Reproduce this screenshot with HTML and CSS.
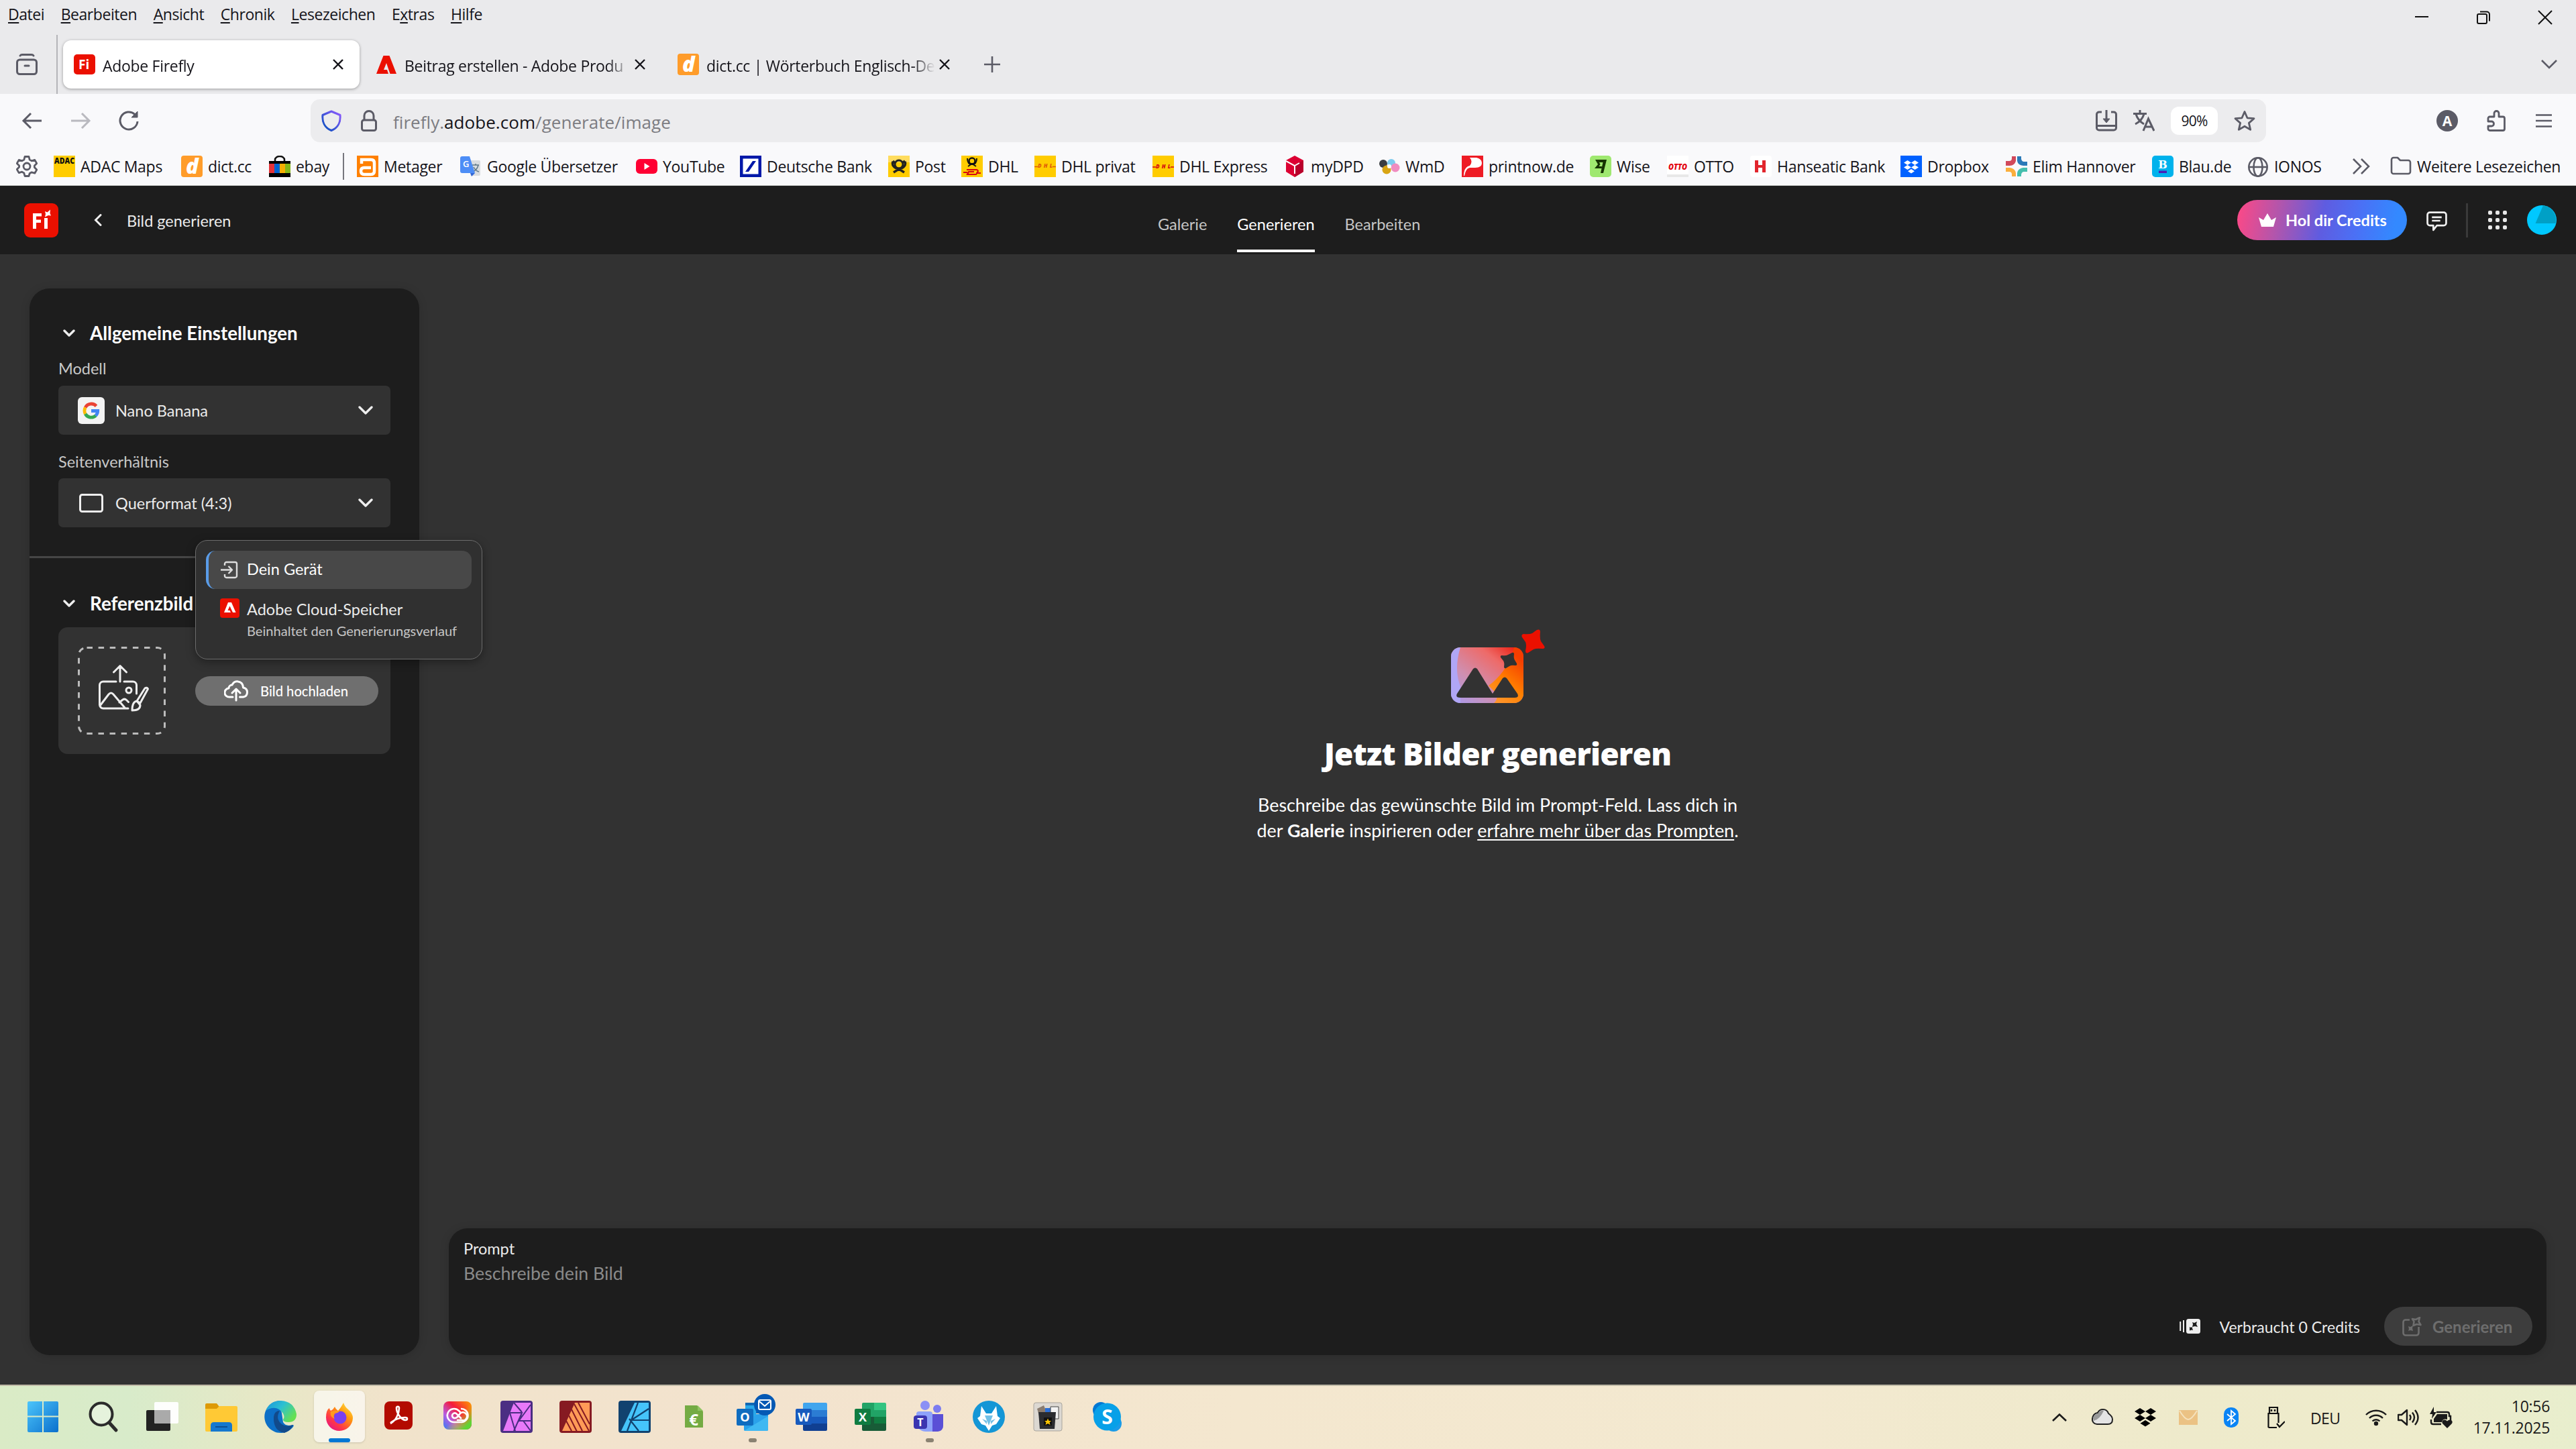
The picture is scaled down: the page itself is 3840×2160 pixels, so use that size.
FILE: index.html
```
<!DOCTYPE html>
<html lang="de">
<head>
  <meta charset="UTF-8" />
  <title>Adobe Firefly</title>
  <link rel="stylesheet" href="styles.css">
</head>
<body>
  <!-- Browser -->
  <div class="browser">
    <div class="menubar">
      <span><u>D</u>atei</span>
      <span><u>B</u>earbeiten</span>
      <span><u>A</u>nsicht</span>
      <span><u>C</u>hronik</span>
      <span><u>L</u>esezeichen</span>
      <span>E<u>x</u>tras</span>
      <span><u>H</u>ilfe</span>
      <div class="window-controls">
        <svg viewBox="0 0 20 20"><path d="M0 9h20" stroke="#111" stroke-width="2"/></svg>
        <svg viewBox="0 0 20 20" fill="none" stroke="#111" stroke-width="2"><rect x="1" y="5" width="14" height="14" rx="2"/><path d="M5 1.500h10a4 4 0 0 1 4 4v10"/></svg>
        <svg viewBox="0 0 20 20"><path d="M0 0l20 20M20 0L0 20" stroke="#111" stroke-width="2"/></svg>
      </div>
    </div>

    <div class="tabs">
      <svg class="firefox-view" viewBox="0 0 32 32" fill="none" stroke="#5b5b66" stroke-width="3" stroke-linecap="round"><rect x="1.500" y="9" width="29" height="21.500" rx="4"/><path d="M6 3q1-1.500 3-1.500h14q2 0 3 1.500M13 18h6"/></svg>
      <div class="tab-sep"></div>
      <div class="tab active">
        <svg class="fav" viewBox="0 0 32 32"><rect y="1" width="32" height="30" rx="5" fill="#eb1000"/><text x="7" y="23" class="fi-text" font-size="19">Fi</text></svg>
        <span class="tab-title">Adobe Firefly</span>
        <svg class="tab-close" viewBox="0 0 16 16"><path d="M1 1l14 14M15 1L1 15" stroke="#15141a" stroke-width="2.400"/></svg>
      </div>
      <div class="tab">
        <svg class="fav" viewBox="0 0 32 32"><path d="M11.500 3h9L31 30h-9.500L16 14l-4 10h5l2 6H1z" fill="#eb1000"/></svg>
        <span class="tab-title">Beitrag erstellen - Adobe Produ</span>
        <svg class="tab-close" viewBox="0 0 16 16"><path d="M1 1l14 14M15 1L1 15" stroke="#15141a" stroke-width="2.400"/></svg>
      </div>
      <div class="tab">
        <svg class="fav" viewBox="0 0 32 32"><rect width="32" height="32" rx="4" fill="#ff9c2a"/><text x="7" y="27" class="dict-text">d</text></svg>
        <span class="tab-title">dict.cc | Wörterbuch Englisch-De</span>
        <svg class="tab-close" viewBox="0 0 16 16"><path d="M1 1l14 14M15 1L1 15" stroke="#15141a" stroke-width="2.400"/></svg>
      </div>
      <svg class="tab-new" viewBox="0 0 24 24"><path d="M12 0v24M0 12h24" stroke="#5b5b66" stroke-width="2.600"/></svg>
      <svg class="tab-list" viewBox="0 0 24 24"><path d="M1 6l11 11L23 6" fill="none" stroke="#5b5b66" stroke-width="2.600"/></svg>
    </div>

    <div class="toolbar">
      <svg class="nav-icon" viewBox="0 0 32 32" fill="none" stroke="#5b5b66" stroke-width="3"><path d="M30 16H3M14 5L3 16l11 11"/></svg>
      <svg class="nav-icon dim" viewBox="0 0 32 32" fill="none" stroke="#5b5b66" stroke-width="3"><path d="M2 16h27M18 5l11 11-11 11"/></svg>
      <svg class="nav-icon" viewBox="0 0 32 32" fill="none" stroke="#5b5b66" stroke-width="3"><path d="M29 17a13 13 0 1 1-4-10.500l3 3"/><path d="M29 2v9h-9z" fill="#5b5b66" stroke-width="1"/></svg>
      <div class="urlbar">
        <svg class="fav" viewBox="0 0 32 32" fill="none" stroke="url(#shieldGrad)" stroke-width="3"><defs><linearGradient id="shieldGrad" x1="0" y1="1" x2="1" y2="0"><stop offset="0" stop-color="#0250bb"/><stop offset="1" stop-color="#9059ff"/></linearGradient></defs><path d="M16 2l13 5.500c1 10-3 19-13 23C6 26.500 2 17.500 3 7.500z" stroke-linejoin="round"/></svg>
        <svg class="lock" viewBox="0 0 24 32" fill="none" stroke="#5b5b66" stroke-width="3"><rect x="1.500" y="15" width="21" height="15.500" rx="3"/><path d="M5 15V8.500a7 7 0 0 1 14 0V15"/></svg>
        <span class="url">firefly.<b>adobe.com</b>/generate/image</span>
        <div class="url-actions">
          <svg class="fav" viewBox="0 0 32 32" fill="none" stroke="#5b5b66" stroke-width="3"><path d="M9 3H5a3.500 3.500 0 0 0-3.500 3.500v20A3.500 3.500 0 0 0 5 30h22a3.500 3.500 0 0 0 3.500-3.500v-20A3.500 3.500 0 0 0 27 3h-4M2 23.500h28M16 0v17"/><path d="M11 13h10l-5 6z" fill="#5b5b66" stroke-width="1"/></svg>
          <svg class="fav" viewBox="0 0 32 32" fill="none" stroke="#5b5b66" stroke-width="3"><path d="M0 5.500h20M10 0v6M4 6c2 7 7 12 12 15M16 6C14 13 9 18 3 21M15 31l7.500-18L31 31M18 25h10"/></svg>
          <span class="zoom">90%</span>
          <svg class="fav" viewBox="0 0 32 32" fill="none" stroke="#5b5b66" stroke-width="2.800" stroke-linejoin="round"><path d="M16 2.500l4 9.300 10 .9-7.600 6.700 2.300 10L16 24.200 7.300 29.400l2.300-10L2 12.700l10-.9z"/></svg>
        </div>
      </div>
      <div class="toolbar-right">
        <svg class="fav" viewBox="0 0 32 32"><circle cx="16" cy="16" r="16" fill="#5b5b66"/><text x="16" y="23.500" text-anchor="middle" fill="#fff" font-size="21" font-weight="700">A</text></svg>
        <svg class="fav" viewBox="0 0 32 32" fill="none" stroke="#5b5b66" stroke-width="2.800" stroke-linejoin="round"><path d="M3 12.500a2.500 2.500 0 0 1 2.500-2.500H12V5a3.500 3.500 0 0 1 7 0v5h6a2.500 2.500 0 0 1 2.500 2.500V28a2.500 2.500 0 0 1-2.500 2.500H5.500A2.500 2.500 0 0 1 3 28v-4h5a3.500 3.500 0 0 0 0-7H3z"/></svg>
        <svg class="burger" viewBox="0 0 24 20"><path d="M0 1.500h24M0 10h24M0 18.500h24" stroke="#5b5b66" stroke-width="2.600"/></svg>
      </div>
    </div>

    <div class="bookmarks">
      <span><svg class="fav" viewBox="0 0 32 32" fill="none" stroke="#5b5b66" stroke-width="2.800" stroke-linejoin="round"><circle cx="16" cy="16" r="5"/><path d="M13 1.500h6l1.200 4.600 3 1.700 4.600-1.400 3 5.200-3.400 3.400v2.600l3.400 3.400-3 5.200-4.600-1.400-3 1.700L19 30.500h-6l-1.200-4.600-3-1.700-4.600 1.400-3-5.200L4.600 17v-2L1.200 11.600l3-5.200 4.600 1.400 3-1.700z"/></svg></span>
      <span><svg class="fav" viewBox="0 0 32 32"><rect width="32" height="32" fill="#fc0"/><text x="1" y="11.500" font-size="12.500" font-weight="800" textLength="30" lengthAdjust="spacingAndGlyphs" fill="#111">ADAC</text></svg>ADAC Maps</span>
      <span><svg class="fav" viewBox="0 0 32 32"><rect width="32" height="32" rx="4" fill="#ff9c2a"/><text x="7" y="27" class="dict-text">d</text></svg>dict.cc</span>
      <span><svg class="fav" viewBox="0 0 32 32"><path d="M9 10V6a7 5 0 0 1 14 0v4" fill="none" stroke="#111" stroke-width="2.500"/><path d="M0 8h32v24H0z"/><path d="M0 12h8v14H0z" fill="#e53238"/><path d="M8 12h8v14H8z" fill="#0064d2"/><path d="M16 12h8v14h-8z" fill="#f5af02"/><path d="M24 12h8v14h-8z" fill="#86b817"/></svg>ebay</span>
      <span class="bm-sep"></span>
      <span><svg class="fav" viewBox="0 0 32 32"><rect width="32" height="32" fill="#ff8000"/><path d="M7 12V6h14q5 0 5 5v12q0 5-5 5H11q-5 0-5-5t5-5h10" fill="none" stroke="#fff" stroke-width="4.500"/></svg>Metager</span>
      <span><svg class="fav" viewBox="0 0 32 32"><path d="M10 7h18a2 2 0 0 1 2 2v19a2 2 0 0 1-2 2H16z" fill="#d9dce0"/><path d="M18 14h10M23 12v2M27 14c-1 5-4 8-8 10M20 17c2 4 4 6 8 7" stroke="#607988" stroke-width="1.500" fill="none"/><path d="M3 1h11l8 25H3a3 3 0 0 1-3-3V4a3 3 0 0 1 3-3z" fill="#4d8df6"/><path d="M15 26h7l-5 5z" fill="#3367d6"/><text x="4" y="17" font-size="13" font-weight="600" fill="#fff">G</text></svg>Google Übersetzer</span>
      <span><svg class="fav" viewBox="0 0 32 32"><rect y="5" width="32" height="22" rx="6" fill="#ff0033"/><path d="M12.500 11l8 5-8 5z" fill="#fff"/></svg>YouTube</span>
      <span><svg class="fav" viewBox="0 0 32 32"><rect width="32" height="32" fill="#0018a8"/><rect x="4.500" y="4.500" width="23" height="23" fill="#fff"/><path d="M8 24L19 8h5L13 24z" fill="#0018a8"/></svg>Deutsche Bank</span>
      <span><svg class="fav" viewBox="0 0 32 32"><rect width="32" height="32" fill="#fc0"/><rect width="32" height="10" fill="#ffdc5e"/><path d="M7 9a9.500 8 0 1 0 18 0M7 8l3 3M25 8l-4 3M8 25l8-5 8 5" fill="none" stroke="#222" stroke-width="3.500"/><circle cx="16" cy="13" r="6" fill="none" stroke="#222" stroke-width="3"/></svg>Post</span>
      <span><svg class="fav" viewBox="0 0 32 32"><rect width="32" height="32" fill="#fc0"/><circle cx="16" cy="8" r="4.500" fill="none" stroke="#111" stroke-width="2.500"/><path d="M9 4q0 9 7 9t7-9M10 16l6-4 6 4" fill="none" stroke="#111" stroke-width="2"/><path d="M8 21h15q3 1 1 4l-2 3H9l2-4h8M3 25h6M22 26h7" fill="none" stroke="#d40511" stroke-width="2.200"/></svg>DHL</span>
      <span><svg class="fav" viewBox="0 0 32 32"><rect width="32" height="32" fill="#fc0"/><text x="5" y="18" class="dhl-text" textLength="22" fill="#e05a08">DHL</text><path d="M0 16.500h5M27 16.500h5" stroke="#e05a08" stroke-width="1.500"/></svg>DHL privat</span>
      <span><svg class="fav" viewBox="0 0 32 32"><rect width="32" height="32" fill="#fc0"/><text x="5" y="18.500" class="dhl-text" textLength="22" fill="#d40511">DHL</text><path d="M0 17h5M27 17h5" stroke="#d40511" stroke-width="1.500"/></svg>DHL Express</span>
      <span><svg class="fav" viewBox="0 0 32 32"><path d="M16 0l13 7v17l-13 8-13-8V7z" fill="#dc0032"/><path d="M16 14l13-7v17l-13 8z" fill="#b8002b"/><path d="M3 8l13 7v12M16 15l7-4" stroke="#fff" stroke-width="2" fill="none"/></svg>myDPD</span>
      <span><svg class="fav" viewBox="0 0 32 32"><circle cx="7" cy="12" r="6" fill="#3a3d42"/><circle cx="19" cy="11" r="6" fill="#7ecbee"/><circle cx="25" cy="18" r="6.500" fill="#f08cc0"/><circle cx="12" cy="21" r="6.500" fill="#d9a514"/><circle cx="16" cy="16" r="3" fill="#fff"/></svg>WmD</span>
      <span><svg class="fav" viewBox="0 0 32 32"><rect width="32" height="32" fill="#ee1c25"/><path d="M12 3h10q8 2 8 8 0 7-10 7H12Q6 19 4 30L3 30Q3 17 12 15q5-6 0-12z" fill="#fff"/></svg>printnow.de</span>
      <span><svg class="fav" viewBox="0 0 32 32"><rect width="32" height="32" rx="5" fill="#9fe870"/><path d="M8 6h17l-5 20h-4l3.500-16H14l1.500 3-2 3H18l-.500 3H7l5-6z" fill="#163300"/></svg>Wise</span>
      <span><svg class="fav" viewBox="0 0 32 32"><rect width="32" height="32" fill="#fff"/><rect y="28" width="32" height="4" fill="#e8e8e8"/><text x="2" y="20.500" font-size="12" font-weight="800" font-style="italic" textLength="28" lengthAdjust="spacingAndGlyphs" fill="#e3000f">OTTO</text></svg>OTTO</span>
      <span><svg class="fav" viewBox="0 0 32 32"><rect width="32" height="32" rx="4" fill="#fff"/><path d="M7 7h5v7h6V7h5v18h-5v-7h-6v7H7z" fill="#e1252c"/></svg>Hanseatic Bank</span>
      <span><svg class="fav" viewBox="0 0 32 32"><rect width="32" height="32" fill="#0061ff"/><path d="M10.500 7l5.500 3.500-5.500 3.500L5 10.500zM21.500 7l5.500 3.500-5.500 3.500-5.500-3.500zM10.500 14l5.500 3.500-5.500 3.500L5 17.500zM21.500 14l5.500 3.500-5.500 3.500-5.500-3.500zM16 20l5 3.200-5 3.300-5-3.300z" fill="#fff"/></svg>Dropbox</span>
      <span><svg class="fav" viewBox="0 0 32 32"><path d="M9 1h6v7q-2 7-9 7H0V8h5q4 0 4-4z" fill="#d1495b"/><path d="M17 1h6v4q1 4 4 4h5v6h-6q-8-1-9-7z" fill="#2b7ab8"/><path d="M0 18h6q8 1 9 8v5H9v-3q0-4-4-4H0z" fill="#fbaf3c"/><path d="M32 18h-6q-8 1-9 8v5h6v-3q1-4 4-4h5z" fill="#45bfae"/></svg>Elim Hannover</span>
      <span><svg class="fav" viewBox="0 0 32 32"><rect width="32" height="32" rx="5" fill="#00b2ec"/><text x="16" y="19" text-anchor="middle" font-family="DejaVu Serif, serif" font-size="16" font-weight="700" fill="#fff">B</text><path d="M10 22.500h12v3.500H10z" fill="#4a1fb8"/></svg>Blau.de</span>
      <span><svg class="fav" viewBox="0 0 32 32" fill="none" stroke="#5b5b66" stroke-width="2.600"><circle cx="16" cy="17" r="13.700"/><ellipse cx="16" cy="17" rx="6.500" ry="13.700"/><path d="M2 17h28"/></svg>IONOS</span>
      <span><svg class="more" viewBox="0 0 26 24"><path d="M1 1l11 11L1 23M13 1l11 11-11 11" fill="none" stroke="#5b5b66" stroke-width="2.600"/></svg></span>
      <span><svg class="fav" viewBox="0 0 32 32" fill="none" stroke="#5b5b66" stroke-width="2.600"><path d="M2 6a3 3 0 0 1 3-3h6l4 4h12a3 3 0 0 1 3 3v14a3 3 0 0 1-3 3H5a3 3 0 0 1-3-3z" stroke-linejoin="round"/></svg>Weitere Lesezeichen</span>
    </div>
  </div>

  <!-- Firefly -->
  <div class="app">
    <header class="app-header">
      <div class="app-left">
        <svg class="fi-logo" viewBox="0 0 51 51"><rect width="51" height="51" rx="9" fill="#eb1000"/><path d="M13 15h13v4.500h-8v5h7V29h-7v9h-5zM30 22h5v16h-5z" fill="#fff"/><path d="M31 12l3.500 1.500 4.500-4-.5 5.500 1.500 3.500-4-.5-5 2.500 1-4.500z" fill="#fff"/></svg>
        <svg class="back" viewBox="0 0 12 18"><path d="M10 1.500L2.500 9l7.500 7.500" fill="none" stroke="#eee" stroke-width="3" stroke-linecap="round"/></svg>
        <span>Bild generieren</span>
      </div>
      <nav class="app-nav">
        <a>Galerie</a>
        <a class="current">Generieren</a>
        <a>Bearbeiten</a>
      </nav>
      <div class="app-right">
        <button class="credits-btn">
          <svg viewBox="0 0 26 20"><path d="M4 20L0 6l7 4 6-10 6 10 7-4-4 14z" fill="#fff"/></svg>
          Hol dir Credits
        </button>
        <svg class="chat" viewBox="0 0 30 30" fill="none" stroke="#f0f0f0" stroke-width="2.600" stroke-linejoin="round"><path d="M5 2.500h20a3.500 3.500 0 0 1 3.500 3.500v12a3.500 3.500 0 0 1-3.500 3.500H15L10 28v-6.500H5A3.500 3.500 0 0 1 1.500 18V6A3.500 3.500 0 0 1 5 2.500zM8 9.500h14M8 14.500h12"/></svg>
        <div class="header-sep"></div>
        <svg class="waffle" viewBox="0 0 28 28" fill="#e8e8e8"><rect width="6" height="6" rx="2"/><rect x="11" width="6" height="6" rx="2"/><rect x="22" width="6" height="6" rx="2"/><rect y="11" width="6" height="6" rx="2"/><rect x="11" y="11" width="6" height="6" rx="2"/><rect x="22" y="11" width="6" height="6" rx="2"/><rect y="22" width="6" height="6" rx="2"/><rect x="11" y="22" width="6" height="6" rx="2"/><rect x="22" y="22" width="6" height="6" rx="2"/></svg>
        <svg class="avatar" viewBox="0 0 44 44"><circle cx="22" cy="22" r="22" fill="#00c8ff"/><path d="M24 0.200A22 22 0 0 1 42.500 27H12.500z" fill="#00a0c6"/></svg>
      </div>
    </header>

    <main class="workspace">
      <aside class="sidebar">
        <h2><svg class="chev-s" viewBox="0 0 18 12"><path d="M2 2l7 7 7-7"/></svg>Allgemeine Einstellungen</h2>
        <label class="lbl-model">Modell</label>
        <div class="select">
          <svg class="g-logo" viewBox="0 0 40 40"><rect width="40" height="40" rx="6" fill="#f3f3f3"/><g fill="none" stroke-width="4.800"><path d="M27.500 13.300A10 10 0 0 0 11.200 15.500" stroke="#ea4335"/><path d="M11.200 15.500a10 10 0 0 0 0 9.500" stroke="#fbbc05"/><path d="M11.200 25a10 10 0 0 0 15.600 2.500" stroke="#34a853"/><path d="M20 20.500h9.700q0 4-3 7.100" stroke="#4285f4"/></g></svg>
          <span>Nano Banana</span>
          <svg class="chev" viewBox="0 0 22 14"><path d="M2 2l9 9 9-9"/></svg>
        </div>
        <label class="lbl-ratio">Seitenverhältnis</label>
        <div class="select">
          <svg class="g-logo" viewBox="0 0 40 40"><rect x="3.500" y="7.500" width="33" height="25" rx="3" fill="none" stroke="#eee" stroke-width="3"/></svg>
          <span>Querformat (4:3)</span>
          <svg class="chev" viewBox="0 0 22 14"><path d="M2 2l9 9 9-9"/></svg>
        </div>
        <hr>
        <h2 class="ref-head"><svg class="chev-s" viewBox="0 0 18 12"><path d="M2 2l7 7 7-7"/></svg>Referenzbild</h2>
        <div class="ref-card">
          <svg class="dropzone" viewBox="0 0 131 131" fill="none" stroke="#eee" stroke-width="3" stroke-linecap="round" stroke-linejoin="round">
            <rect x="1.500" y="1.500" width="128" height="128" rx="11" stroke="#bbb" stroke-linecap="butt" stroke-dasharray="8.500 8.600" stroke-dashoffset="-1"/>
            <path d="M63 52V29M53.500 38L63 28.500l9.500 9.500M57 52H38a5.500 5.500 0 0 0-5.500 5.500v29A5.500 5.500 0 0 0 38 92h37M69 52h13a5.500 5.500 0 0 1 5.500 5.500V70M33 88l13-17q3.500-4 7 0l17 20M62 83l5-4q3-2 5.500.500l3 3"/>
            <circle cx="76" cy="65" r="4"/>
            <path d="M88 81l12-19q3-2 4.500 1L93 84zM88 81q-7 1-7 14 12 0 12-8z"/>
          </svg>
          <button class="upload-btn">
            <svg viewBox="0 0 36 32" fill="none" stroke="#fff" stroke-width="3" stroke-linecap="round" stroke-linejoin="round"><path d="M13 25H8a6.500 6.500 0 0 1-1-13 5 5 0 0 1 5-5q3-6 9-5 7 1 7.500 9 6 1 6 7t-6 7h-5M18 30V14M12 19l6-6 6 6"/></svg>
            Bild hochladen
          </button>
        </div>

        <div class="popover">
          <div class="pop-item hover">
            <svg viewBox="0 0 29 29" fill="none" stroke="#ddd" stroke-width="2.400" stroke-linejoin="round"><path d="M7 8V5.500A2.500 2.500 0 0 1 9.500 3h13A2.500 2.500 0 0 1 25 5.500v18a2.500 2.500 0 0 1-2.500 2.500h-13A2.500 2.500 0 0 1 7 23.500V21M1 14.500h17M12.500 9l5.500 5.500-5.500 5.500"/></svg>
            <span>Dein Gerät</span>
          </div>
          <div class="pop-item cloud">
            <svg viewBox="0 0 29 29"><rect width="29" height="29" rx="4" fill="#eb1000"/><path d="M12 6h5l6.500 15h-4.500L14.500 11.500 11.500 18h3l1.500 3H6z" fill="#fff"/></svg>
            <div><span>Adobe Cloud-Speicher</span><small>Beinhaltet den Generierungsverlauf</small></div>
          </div>
        </div>
      </aside>

      <section class="stage">
        <div class="empty">
          <svg class="hero" viewBox="0 0 140 110">
            <defs>
              <linearGradient id="g1" x1="0" y1="1" x2="1" y2="0"><stop offset="0" stop-color="#a79bf0"/><stop offset=".35" stop-color="#cf8fb0"/><stop offset=".7" stop-color="#ee6a68"/><stop offset="1" stop-color="#eb1000"/></linearGradient>
              <linearGradient id="g2" x1="0" y1="1" x2=".5" y2="0"><stop offset="0" stop-color="#ff9c3a"/><stop offset=".5" stop-color="#ff8000"/><stop offset="1" stop-color="#f53d00"/></linearGradient>
              <clipPath id="card"><rect y="27" width="108" height="83" rx="14"/></clipPath>
            </defs>
            <g clip-path="url(#card)">
              <path d="M0 27h108v83H0z" fill="url(#g1)"/>
              <path d="M0 27h14Q4 60 14 85l0 25H0z" fill="#b0a6f6"/>
              <path d="M94 27h14v83H64q6-5 4-14L56 84Q84 64 94 27z" fill="url(#g2)"/>
            </g>
            <path d="M33 59q3-3 6 0l23 37 15-23q3-3 6 0l16 23q3 6-4 6H14q-8 0-5-6z" fill="#323232"/>
            <path d="M76 39q6 1 9-1l6-3q3-1 3 2-1 6 1 9l3 5q1 3-2 3-6-1-9 1l-5 3q-3 1-3-2 1-6-1-9l-4-5q-1-3 2-3z" fill="#323232"/>
            <path d="M108 7q9 1 13-1l7-5q5-2 5 3-1 10 1 14l5 7q2 4-3 4-9-1-13 1l-8 5q-4 2-4-3 2-9 0-13l-5-7q-2-4 2-5z" fill="#eb1000"/>
          </svg>
          <h1>Jetzt Bilder generieren</h1>
          <p>Beschreibe das gewünschte Bild im Prompt-Feld. Lass dich in<br>der <b>Galerie</b> inspirieren oder <a>erfahre mehr über das Prompten</a>.</p>
        </div>
        <div class="prompt">
          <div class="prompt-label">Prompt</div>
          <div class="prompt-input">Beschreibe dein Bild</div>
          <div class="prompt-foot">
            <svg class="credit-icon" viewBox="0 0 32 24"><path d="M1.200 5v14M6 3v18" stroke="#eee" stroke-width="2"/><rect x="10" y="1" width="21" height="22" rx="3.500" fill="#eee"/><path d="M19 6l3 1 4-2-1 4 2 4-4-1-4 1 1-4zM15 13l2 1 2-1v2l1 3-2-.500-3 1v-3z" fill="#1d1d1d"/></svg>
            <span>Verbraucht 0 Credits</span>
            <button class="generate-btn" disabled>
              <svg viewBox="0 0 29 29" fill="none" stroke="#6d6d6d" stroke-width="2.600" stroke-linejoin="round"><path d="M11 4.500H5A3.500 3.500 0 0 0 1.500 8v16A3.500 3.500 0 0 0 5 27.500h16a3.500 3.500 0 0 0 3.500-3.500v-9"/><path d="M15 3l5 1 6-3-1.500 6 3 5-6-1-5 2 1-6z"/><path d="M9 14l3 1 4-2-1 4 1 4-4-1-3 1 1-3z" fill="#6d6d6d" stroke="none"/></svg>
              Generieren
            </button>
          </div>
        </div>
      </section>
    </main>
  </div>

  <!-- Windows-Taskleiste -->
  <footer class="taskbar">
    <div class="apps">
      <div class="task start"><svg viewBox="0 0 48 48"><defs><linearGradient id="win" x1="0" y1="0" x2="1" y2="1"><stop offset="0" stop-color="#4cc5fb"/><stop offset="1" stop-color="#0a6fcc"/></linearGradient></defs><path d="M3 1h20v21.500H1V3a2 2 0 0 1 2-2zM25 1h20a2 2 0 0 1 2 2v19.500H25zM1 24.500h22V47H3a2 2 0 0 1-2-2zM25 24.500h22V45a2 2 0 0 1-2 2H25z" fill="url(#win)"/></svg></div>
      <div class="task"><svg viewBox="0 0 48 48"><circle cx="21" cy="20" r="16.500" fill="#fff" fill-opacity=".35" stroke="#2b2b2b" stroke-width="4"/><path d="M33 33l10 11" stroke="#2b2b2b" stroke-width="5" stroke-linecap="round"/></svg></div>
      <div class="task"><svg viewBox="0 0 48 48"><rect y="14" width="36" height="31" rx="2" fill="#222"/><rect x="12" y="2" width="36" height="32" rx="2" fill="#fff" fill-opacity=".95"/><path d="M12 14h24v20H14a2 2 0 0 1-2-2z" fill="#aaa"/></svg></div>
      <div class="task"><svg viewBox="0 0 48 48"><path d="M0 6a2 2 0 0 1 2-2h15l4 5v6H0z" fill="#dd9a06"/><path d="M0 12h17l4-4h25a2 2 0 0 1 2 2v34a2 2 0 0 1-2 2H2a2 2 0 0 1-2-2z" fill="#ffc935"/><path d="M8 46V37q0-5 5-5h22q5 0 5 5v9z" fill="#1578cf"/><path d="M15 39h18" stroke="#0c4f95" stroke-width="2"/></svg></div>
      <div class="task"><svg viewBox="0 0 48 48"><defs><linearGradient id="edge" x1="0" y1="0" x2="1" y2=".6"><stop offset="0" stop-color="#1b93dc"/><stop offset=".5" stop-color="#2cc0d2"/><stop offset="1" stop-color="#66e052"/></linearGradient></defs><path d="M24 0a24 24 0 1 0 19 39q2-3-1-3-10 3-14-4l-2-14Q20 2 24 0z" fill="#0c6fc7"/><path d="M14 24q1-9 9-9-7 12 3 20 7 5 17 1-4 9-13 12Q13 45 14 24z" fill="#114a8b"/><path d="M2 15Q8 0 25 0q19 1 23 20 0 12-12 12-8 0-8-4 3-3 0-9-10-14-26-4z" fill="url(#edge)"/></svg></div>
      <div class="task open"><svg viewBox="0 0 48 48"><defs><linearGradient id="fox" x1="1" y1="0" x2=".2" y2="1"><stop offset="0" stop-color="#fff44f"/><stop offset=".4" stop-color="#ff980e"/><stop offset=".75" stop-color="#ff3647"/><stop offset="1" stop-color="#e31587"/></linearGradient></defs><path d="M24 45A20 20 0 0 1 4 25Q4 14 9 11q0 2 2 4 4-2 6-6 1 3 5 6 5-6 8-12 2 6 7 10 7 6 7 13A20 20 0 0 1 24 45z" fill="url(#fox)"/><circle cx="25" cy="25" r="9.500" fill="#7a3ff0"/><path d="M11 16q9-2 13 0-3 3-7 3-3 4 0 8-8-3-6-11z" fill="#ff9a1f"/></svg></div>
      <div class="task"><svg viewBox="0 0 48 48"><rect x="3" y="1" width="42" height="42" rx="8" fill="#b30b00"/><path d="M12 34c8-4 13-15 13-23 0-3-4-3-4 0 0 8 7 17 13 18 4 0 4-4 0-4-8 0-16 3-22 8" fill="none" stroke="#fff" stroke-width="2.600"/></svg></div>
      <div class="task"><svg viewBox="0 0 48 48"><defs><linearGradient id="cc" x1="0" y1="1" x2="1" y2="0"><stop offset="0" stop-color="#2e7df6"/><stop offset=".3" stop-color="#b85de0"/><stop offset=".6" stop-color="#f51a3c"/><stop offset="1" stop-color="#ff9a00"/></linearGradient><linearGradient id="cc2" x1="0" y1="0" x2="1" y2="1"><stop offset=".5" stop-color="#ffd400" stop-opacity="0"/><stop offset=".85" stop-color="#5fd435"/></linearGradient></defs><rect x="3" y="1" width="42" height="42" rx="8" fill="url(#cc)"/><rect x="3" y="1" width="42" height="42" rx="8" fill="url(#cc2)"/><path d="M30 32H19a10 10 0 1 1 7-17l3 3M19 26q-3-1-3-4a4 4 0 0 1 6-3l7 7M20 26q2 0 4-2l4-5a6 6 0 1 1 2 10h-6" fill="none" stroke="#fff" stroke-width="2.600" stroke-linecap="round"/><path d="M29 12a10 10 0 0 1 1 20" fill="none" stroke="#fff" stroke-width="2.600"/></svg></div>
      <div class="task"><svg viewBox="0 0 48 48"><rect width="48" height="48" rx="4" fill="#4b2e83"/><path d="M20 3h25v42H4z" fill="#e879f9"/><path d="M20 3l12 14M45 6L26 32M14 18h18L20 45M26 30h20M32 18l-4 12M14 18l8 27M34 30l11 15" fill="none" stroke="#4b2e83" stroke-width="2"/></svg></div>
      <div class="task"><svg viewBox="0 0 48 48"><rect width="48" height="48" rx="4" fill="#861a22"/><path d="M23 3h22v42H4z" fill="#ff9a57"/><path d="M22 5l22 40M18 13l16 32M14 22l12 24M10 30l8 15M28 3l17 32" stroke="#861a22" stroke-width="2"/></svg></div>
      <div class="task"><svg viewBox="0 0 48 48"><rect width="48" height="48" rx="4" fill="#11426f"/><path d="M24 3h21v42H4z" fill="#45c4fa"/><path d="M29 3L13 45M20 29h25M16 27l14 18M45 12L19 29" fill="none" stroke="#11426f" stroke-width="2.200"/></svg></div>
      <div class="task"><svg viewBox="0 0 48 48"><path d="M11 7h18l9 9v24H11z" fill="#74ab43"/><path d="M30 7l8 8h-8z" fill="#8fc461"/><text x="24" y="37" text-anchor="middle" font-size="24" font-weight="700" fill="#fff">€</text></svg></div>
      <div class="task running"><svg viewBox="0 0 48 48"><path d="M13 3h25v16H13z" fill="#1068b4"/><path d="M11 20h36v23a2 2 0 0 1-2 2H13a2 2 0 0 1-2-2z" fill="#2aa1ea"/><path d="M13 7h16v16H13z" fill="#28a8ea"/><path d="M11 45l36-22v20a2 2 0 0 1-2 2z" fill="#3fb8f2"/><rect y="12" width="25" height="25" rx="2" fill="#0f6cbf"/><text x="12.500" y="31" text-anchor="middle" font-size="18" font-weight="700" fill="#fff">O</text></svg><i class="mail-badge"><svg viewBox="0 0 32 32"><circle cx="16" cy="16" r="16" fill="#0559b4"/><rect x="7" y="9" width="18" height="14" rx="2" fill="none" stroke="#fff" stroke-width="2"/><path d="M8 11l8 7 8-7" fill="none" stroke="#fff" stroke-width="2"/></svg></i></div>
      <div class="task"><svg viewBox="0 0 48 48"><path d="M11 5a2 2 0 0 1 2-2h32a2 2 0 0 1 2 2v9H11z" fill="#41a5ee"/><path d="M11 14h36v10H11z" fill="#2b7cd3"/><path d="M11 24h36v10H11z" fill="#185abd"/><path d="M11 34h36v9a2 2 0 0 1-2 2H13a2 2 0 0 1-2-2z" fill="#103f91"/><rect y="12" width="24" height="24" rx="2" fill="#185abd"/><text x="12" y="30.500" text-anchor="middle" font-size="18" font-weight="700" fill="#fff">W</text></svg></div>
      <div class="task"><svg viewBox="0 0 48 48"><path d="M11 5a2 2 0 0 1 2-2h16v21H11z" fill="#21a366"/><path d="M29 3h16a2 2 0 0 1 2 2v9H29z" fill="#33c481"/><path d="M29 14h18v10H29z" fill="#21a366"/><path d="M11 24h36v19a2 2 0 0 1-2 2H13a2 2 0 0 1-2-2z" fill="#185c37"/><path d="M29 24h18v10H29z" fill="#107c41"/><rect y="12" width="24" height="24" rx="2" fill="#107c41"/><text x="12" y="30.500" text-anchor="middle" font-size="18" font-weight="700" fill="#fff">X</text></svg></div>
      <div class="task running"><svg viewBox="0 0 48 48"><circle cx="17" cy="7" r="7" fill="#8b90f5"/><circle cx="35" cy="12" r="6" fill="#7c7cf0"/><path d="M28 20h16v17a8 8 0 0 1-8 9h-8z" fill="#5b50d6"/><path d="M4 20a4 4 0 0 1 4-4h16a4 4 0 0 1 4 4v26H18A14 14 0 0 1 4 32z" fill="#8ea2fa"/><rect y="22" width="20" height="20" rx="4" fill="#3b35b0"/><text x="10" y="38" text-anchor="middle" font-size="16" font-weight="700" fill="#fff">T</text></svg></div>
      <div class="task"><svg viewBox="0 0 48 48"><circle cx="24" cy="24" r="24" fill="#1496d6"/><path d="M13 8l7 11h8l7-11 2 15 4 3-6 9-6 2-5 8-5-8-6-2-6-9 4-3z" fill="#fff"/><path d="M14 27l7 3v5zM34 27l-7 3v5zM18 22l6 15 6-15" fill="#1496d6" fill-opacity=".6"/></svg></div>
      <div class="task"><svg viewBox="0 0 48 48"><rect x="3" y="3" width="42" height="42" rx="3" fill="#dcd8d2" stroke="#a9a49c"/><path d="M8 12l10-5 4 10-11 5z" fill="#8a7c70"/><path d="M20 11h16v8H20z" fill="#2a6fd8"/><path d="M28 9h12v18H28z" fill="#f3f3f3" stroke="#444"/><path d="M10 17h26l-2 25H12z" fill="#2b2c30"/><rect x="18" y="25" width="12" height="12" fill="#111"/><path d="M24 26.500l1.500 3.500h3.500l-2.500 2.300 1 3.700-3.500-2-3.500 2 1-3.700-2.500-2.300h3.500z" fill="#ffc400"/></svg></div>
      <div class="task"><svg viewBox="0 0 48 48"><circle cx="15" cy="14" r="12" fill="#0078d4"/><circle cx="34" cy="34" r="12" fill="#1a9be8"/><circle cx="24.500" cy="24" r="20.500" fill="#08a0e8"/><text x="24.500" y="35" text-anchor="middle" font-size="30" font-weight="700" fill="#fff">S</text></svg></div>
    </div>
    <div class="tray">
      <svg class="t-up" viewBox="0 0 22 12"><path d="M1 11L11 1.500 21 11" fill="none" stroke="#1a1a1a" stroke-width="2.600"/></svg>
      <svg class="t-cloud" viewBox="0 0 32 32"><path d="M8 26a7 7 0 0 1-7-8q1-8 8-9 2-5 8-5 6 0 8 6 6 4 6 9 0 7-7 7z" fill="#e4e4e4" stroke="#222" stroke-width="2"/><path d="M3 21q9-2 15-15-6-1-8 4-7 1-8 7z" fill="#999"/></svg>
      <svg class="t-box" viewBox="0 0 32 32"><path d="M8 2l8 5-8 5-8-5zM24 2l8 5-8 5-8-5zM8 12l8 5-8 5-8-5zM24 12l8 5-8 5-8-5zM16 20l7.500 4.700L16 29.500l-7.500-4.800z"/></svg>
      <svg class="t-mail" viewBox="0 0 28 28"><rect y="3" width="28" height="22" fill="#ebc284"/><path d="M1 4q8 13 13 13T27 4" fill="none" stroke="#f5e2bd" stroke-width="2"/></svg>
      <svg class="t-bt" viewBox="0 0 22 32"><rect y="1" width="22" height="30" rx="10" fill="#0a84f5"/><path d="M5 11l12 10-6 5V6l6 5L5 21" fill="none" stroke="#fff" stroke-width="1.800"/></svg>
      <svg class="t-usb" viewBox="0 0 26 34" fill="none" stroke="#111" stroke-width="2.200"><path d="M3 11V2h12v9M1.500 32V11h15v14M1.500 32H14M14 26l4 5 8-8"/><path d="M6 5v3M11 5v3" stroke-width="2.500"/></svg>
      <span class="lang">DEU</span>
      <svg class="t-net" viewBox="0 0 32 32" fill="none" stroke="#1a1a1a" stroke-width="2.400"><path d="M1 12a21 21 0 0 1 30 0M6 17a14 14 0 0 1 20 0M10.500 21.500a8 8 0 0 1 11 0"/><circle cx="16" cy="25" r="2" fill="#1a1a1a"/></svg>
      <svg class="t-net" viewBox="0 0 32 32" fill="none" stroke="#1a1a1a" stroke-width="2.400" stroke-linejoin="round"><path d="M1 12h5l8-7v22l-8-7H1zM18 12q3 4 0 8M22 8.500q6 7.500 0 15M26 5q9 11 0 22"/></svg>
      <svg class="t-bat" viewBox="0 0 34 32"><path d="M10 8h16q3 0 3 3v3h2v6" fill="none" stroke="#1a1a1a" stroke-width="2.400"/><path d="M6 0L0 11h4l-1 7 7-10H6z" fill="#1a1a1a"/><path d="M2 19v4q0 3 3 3h12" fill="none" stroke="#1a1a1a" stroke-width="2.400"/><path d="M11 11h15v8q-7-2-8 4H6v-5z" fill="#1a1a1a"/><path d="M26 32l-7-7q-2-4 2-5.500 3-.500 5 2 2-2.500 5-2 4 1.500 2 5.500z" fill="#1a1a1a"/></svg>
      <div class="clock"><span>10:56</span><span>17.11.2025</span></div>
    </div>
  </footer>
</body>
</html>
```
FILE: styles.css
```
* {
  box-sizing: border-box;
}
body {
  margin: 0;
  width: 3840px;
  height: 2160px;
  overflow: hidden;
  display: flex;
  flex-direction: column;
  font-family: "Open Sans", "Noto Sans", sans-serif;
  font-size: 23px;
  letter-spacing: -0.3px;
  color: #15141a;
  background: #323232;
}
svg {
  display: block;
  flex: none;
}
svg text {
  letter-spacing: 0;
}
button {
  font: inherit;
  border: 0;
  padding: 0;
  display: flex;
  align-items: center;
}
.fav {
  width: 32px;
  height: 32px;
}
.fi-text {
  fill: #fff;
  font-weight: 700;
}
.dict-text {
  fill: #fff;
  font-size: 31px;
  font-weight: 800;
  font-style: italic;
}
.dhl-text {
  font-size: 8px;
  font-weight: 800;
  font-style: italic;
}

/* Browser */
.browser {
  height: 277px;
  background: #f9f9fb;
  border-bottom: 1px solid #c4c7c5;
}
.menubar {
  height: 52px;
  display: flex;
  align-items: flex-start;
  gap: 24.5px;
  padding-left: 12px;
  line-height: 43px;
  letter-spacing: -0.45px;
  background: #eaeaec;
}
.menubar u {
  text-underline-offset: 3px;
}
.window-controls {
  margin-left: auto;
  height: 52px;
  display: flex;
  align-items: center;
}
.window-controls svg {
  width: 20px;
  height: 20px;
  margin: 0 36px;
  overflow: visible;
}
.tabs {
  height: 88px;
  display: flex;
  align-items: center;
  padding: 0 28px 0 24px;
  background: #eaeaec;
}
.firefox-view {
  width: 32px;
  height: 32px;
}
.tab-sep {
  width: 2px;
  height: 88px;
  margin: 0 8px 0 28px;
  background: #b4b4b8;
}
.tab {
  width: 442px;
  height: 72px;
  margin-right: 8px;
  padding: 0 24px 0 16px;
  display: flex;
  align-items: center;
  border-radius: 12px;
}
.tab.active {
  background: #fff;
  box-shadow: 0 1px 4px rgba(0, 0, 0, 0.35);
}
.tab-title {
  flex: 1;
  margin: 3px 6px 0 11px;
  white-space: nowrap;
  mask-image: linear-gradient(to left, transparent, #000 34px);
}
.tab-close {
  width: 16px;
  height: 16px;
}
.tab-new {
  width: 24px;
  height: 24px;
  margin-left: 23px;
}
.tab-list {
  width: 24px;
  height: 24px;
  margin-left: auto;
}
.toolbar {
  height: 80px;
  display: flex;
  align-items: center;
  padding: 0 36px 0 32px;
}
.nav-icon {
  width: 32px;
  height: 32px;
  margin-right: 40px;
}
.nav-icon.dim {
  opacity: 0.4;
}
.urlbar {
  width: 2915px;
  height: 64px;
  margin-left: 215px;
  padding: 0 16px 0 15px;
  display: flex;
  align-items: center;
  border-radius: 14px;
  background: #ececee;
}
.lock {
  width: 24px;
  height: 32px;
  margin: 0 24px 0 28px;
}
.url {
  font-size: 26px;
  letter-spacing: 0.05px;
  margin-top: 4px;
  color: #7c7c82;
}
.url b {
  font-weight: 400;
  color: #15141a;
}
.url-actions {
  margin-left: auto;
  display: flex;
  align-items: center;
  gap: 24px;
}
.zoom {
  width: 70px;
  height: 42px;
  line-height: 43px;
  text-align: center;
  font-size: 21px;
  letter-spacing: -0.8px;
  border-radius: 12px;
  background: #fff;
}
.toolbar-right {
  margin-left: auto;
  display: flex;
  align-items: center;
  gap: 42px;
}
.burger {
  width: 24px;
  height: 20px;
}
.bookmarks {
  height: 56px;
  padding-left: 24px;
  display: grid;
  grid-template-columns: 56px 190px 131px 110px 21px 154px 262px 155px 221px 109px 109px 176px 196px 141px 124px 191px 115px 124px 224px 157px 218px 142px 157px 56px auto;
  align-items: center;
  line-height: 34px;
  white-space: nowrap;
}
.bookmarks span {
  display: flex;
  align-items: center;
  gap: 8px;
}
.bookmarks .bm-sep {
  width: 2px;
  height: 40px;
  background: #77777d;
}
.more {
  width: 26px;
  height: 24px;
}

/* Firefly */
.app {
  height: 1787px;
  display: flex;
  flex-direction: column;
  font-family: Lato, "Open Sans", sans-serif;
  font-size: 23.5px;
  letter-spacing: 0;
  color: #ebebeb;
}
.app-header {
  height: 102px;
  display: flex;
  background: #1d1d1d;
}
.app-left {
  width: 1726px;
  padding-left: 36px;
  display: flex;
  align-items: center;
}
.app-left span {
  margin-top: 2px;
}
.fi-logo {
  width: 51px;
  height: 51px;
}
.back {
  width: 12px;
  height: 18px;
  margin: 0 37px 0 53px;
}
.app-nav {
  display: flex;
  gap: 45px;
}
.app-nav a {
  height: 99px;
  padding-top: 20px;
  line-height: 75px;
  color: #c6c6c6;
  border-bottom: 4px solid transparent;
}
.app-nav .current {
  color: #fff;
  border-bottom-color: #fff;
}
.app-right {
  margin-left: auto;
  padding-right: 29px;
  display: flex;
  align-items: center;
}
.credits-btn {
  width: 253px;
  height: 60px;
  padding-left: 32px;
  gap: 14px;
  border-radius: 30px;
  font-weight: 700;
  white-space: nowrap;
  color: #fff;
  background: linear-gradient(100deg, #ff4885 0%, #b455ab 24%, #5f5ce0 50%, #4b70f5 70%, #3389ff 92%);
}
.credits-btn svg {
  width: 26px;
  height: 20px;
}
.chat {
  width: 31px;
  height: 31px;
  margin: 3px 28px 0 29px;
}
.header-sep {
  width: 3px;
  height: 51px;
  background: #3a3a3a;
}
.waffle {
  width: 28px;
  height: 28px;
  margin: 0 30px;
}
.avatar {
  width: 44px;
  height: 44px;
}
.workspace {
  flex: 1;
  display: flex;
  gap: 44px;
  padding: 51px 44px 44px;
  background: #323232;
}
.sidebar {
  position: relative;
  width: 581px;
  padding: 49px 43px 0;
  border-radius: 30px;
  background: #1d1d1d;
  box-shadow: 0 2px 14px rgba(0, 0, 0, 0.15);
}
.sidebar h2 {
  margin: 0;
  padding-left: 7px;
  display: flex;
  align-items: center;
  line-height: 36px;
  font-size: 27.7px;
  font-weight: 700;
  color: #fff;
}
.chev-s {
  width: 18px;
  height: 12px;
  margin-right: 22px;
}
.chev-s path,
.chev path {
  fill: none;
  stroke: #eee;
  stroke-width: 3.4;
  stroke-linecap: round;
  stroke-linejoin: round;
}
.sidebar label {
  display: block;
  line-height: 32px;
  color: #c8c8c8;
}
.sidebar .lbl-model {
  margin: 18px 0 10px;
}
.sidebar .lbl-ratio {
  margin: 24px 0 9px;
}
.select {
  height: 73px;
  padding: 0 26px 0 29px;
  display: flex;
  align-items: center;
  border-radius: 7px;
  background: #323232;
}
.select span {
  flex: 1;
}
.g-logo {
  width: 40px;
  height: 40px;
  margin-right: 16px;
}
.chev {
  width: 22px;
  height: 14px;
}
.sidebar hr {
  height: 3px;
  margin: 43px -43px 0;
  border: 0;
  background: #464646;
}
.sidebar .ref-head {
  margin-top: 50px;
}
.ref-card {
  height: 189px;
  margin-top: 17px;
  padding-left: 29px;
  display: flex;
  align-items: center;
  gap: 44px;
  border-radius: 14px;
  background: #323232;
}
.dropzone {
  width: 131px;
  height: 131px;
}
.upload-btn {
  width: 273px;
  height: 44px;
  padding-left: 43px;
  gap: 18px;
  border-radius: 22px;
  font-size: 20.2px;
  font-weight: 500;
  color: #fff;
  background: #6f6f6f;
}
.upload-btn svg {
  width: 36px;
  height: 32px;
}
.popover {
  position: absolute;
  left: 247px;
  top: 375px;
  width: 428px;
  height: 178px;
  padding: 15px;
  border: 1px solid #6c6c6c;
  border-radius: 18px;
  background: #303030;
  box-shadow: 0 4px 14px rgba(0, 0, 0, 0.35);
}
.pop-item {
  padding-left: 21px;
  display: flex;
  gap: 11px;
}
.pop-item svg {
  width: 29px;
  height: 29px;
}
.pop-item.hover {
  height: 57px;
  padding-left: 17px;
  align-items: center;
  line-height: 30px;
  color: #fff;
  border-left: 4px solid #5a9ce8;
  border-radius: 14px;
  background: #484848;
}
.pop-item.hover span {
  margin-bottom: 3px;
}
.pop-item.cloud {
  padding-top: 14px;
  line-height: 32px;
  white-space: nowrap;
}
.pop-item small {
  display: block;
  margin-top: 3px;
  line-height: 26px;
  font-size: 20.1px;
  color: #c6c6c6;
}
.stage {
  flex: 1;
  display: flex;
  flex-direction: column;
}
.empty {
  flex: 1;
  padding-top: 508px;
  display: flex;
  flex-direction: column;
  align-items: center;
  text-align: center;
  color: #fff;
}
.hero {
  width: 140px;
  height: 110px;
}
.empty h1 {
  margin: 45px 0 0;
  line-height: 60px;
  font-family: "Open Sans", sans-serif;
  font-size: 46px;
  font-weight: 800;
  letter-spacing: -0.8px;
}
.empty p {
  margin: 28px 0 0;
  line-height: 38px;
  font-size: 26.9px;
}
.empty p a {
  text-decoration: underline;
  text-decoration-thickness: 2px;
  text-underline-offset: 3px;
  text-decoration-skip-ink: none;
}
.prompt {
  height: 189px;
  padding: 14px 21px 14px 22px;
  display: flex;
  flex-direction: column;
  border-radius: 28px;
  background: #1d1d1d;
  box-shadow: 0 2px 14px rgba(0, 0, 0, 0.15);
}
.prompt-label {
  line-height: 32px;
}
.prompt-input {
  margin-top: 3px;
  line-height: 36px;
  font-size: 26.7px;
  color: #8a8a8a;
}
.prompt-foot {
  margin-top: auto;
  display: flex;
  align-items: center;
  justify-content: flex-end;
}
.credit-icon {
  width: 32px;
  height: 24px;
  margin-right: 28px;
}
.prompt-foot span {
  font-size: 23.1px;
  margin-top: 2px;
}
.generate-btn {
  width: 221px;
  height: 58px;
  margin-left: 36px;
  padding-left: 27px;
  gap: 16px;
  border-radius: 29px;
  font-size: 24px;
  font-weight: 700;
  color: #6d6d6d;
  background: #3d3d3d;
}
.generate-btn svg {
  width: 29px;
  height: 29px;
}

/* Taskleiste */
.taskbar {
  height: 96px;
  display: flex;
  justify-content: space-between;
  border-top: 2px solid #bfb9a6;
  background: linear-gradient(90deg, #daebc6 0%, #d8ebca 5%, #e6e8c6 10%, #f1e3cb 15%, #f3e3ce 30%, #f4e7cf 48%, #f3e9d0 70%, #eeeacb 85%, #eeeccc 94%, #e8eecd 100%);
}
.apps {
  display: flex;
  padding-left: 22px;
}
.task {
  position: relative;
  width: 76px;
  height: 77px;
  margin: 7px 6px 0;
  padding: 15px 14px 0;
}
.task.start {
  padding-left: 12px;
}
.task > svg {
  width: 48px;
  height: 48px;
}
.task.open {
  border-radius: 8px;
  background: rgba(255, 255, 255, 0.6);
  box-shadow: 0 1px 3px rgba(0, 0, 0, 0.15);
}
.task.open::after,
.task.running::after {
  content: "";
  position: absolute;
  left: 32px;
  bottom: 0;
  width: 12px;
  height: 6px;
  border-radius: 3px;
  background: #8a8272;
}
.task.open::after {
  left: 22px;
  width: 32px;
  background: #0078d4;
}
.mail-badge {
  position: absolute;
  left: 40px;
  top: 5px;
  width: 32px;
  height: 32px;
}
.tray {
  display: flex;
  align-items: center;
  padding-right: 39px;
  color: #1a1a1a;
}
.t-up {
  width: 22px;
  height: 12px;
  margin-right: 37px;
}
.t-cloud,
.t-box {
  width: 32px;
  height: 32px;
  margin-right: 32px;
}
.tray .t-box {
  margin-right: 34px;
}
.t-mail {
  width: 28px;
  height: 28px;
  margin-right: 39px;
}
.t-bt {
  width: 22px;
  height: 32px;
  margin-right: 43px;
}
.t-usb {
  width: 26px;
  height: 34px;
  margin-right: 38px;
}
.lang {
  width: 45px;
  margin: 2px 37px 0 0;
  letter-spacing: -0.6px;
}
.t-net {
  width: 32px;
  height: 32px;
  margin-right: 16px;
}
.t-bat {
  width: 34px;
  height: 32px;
}
.clock {
  width: 145px;
  margin-bottom: 2px;
  line-height: 32px;
  text-align: right;
}
.clock span {
  display: block;
}
```
